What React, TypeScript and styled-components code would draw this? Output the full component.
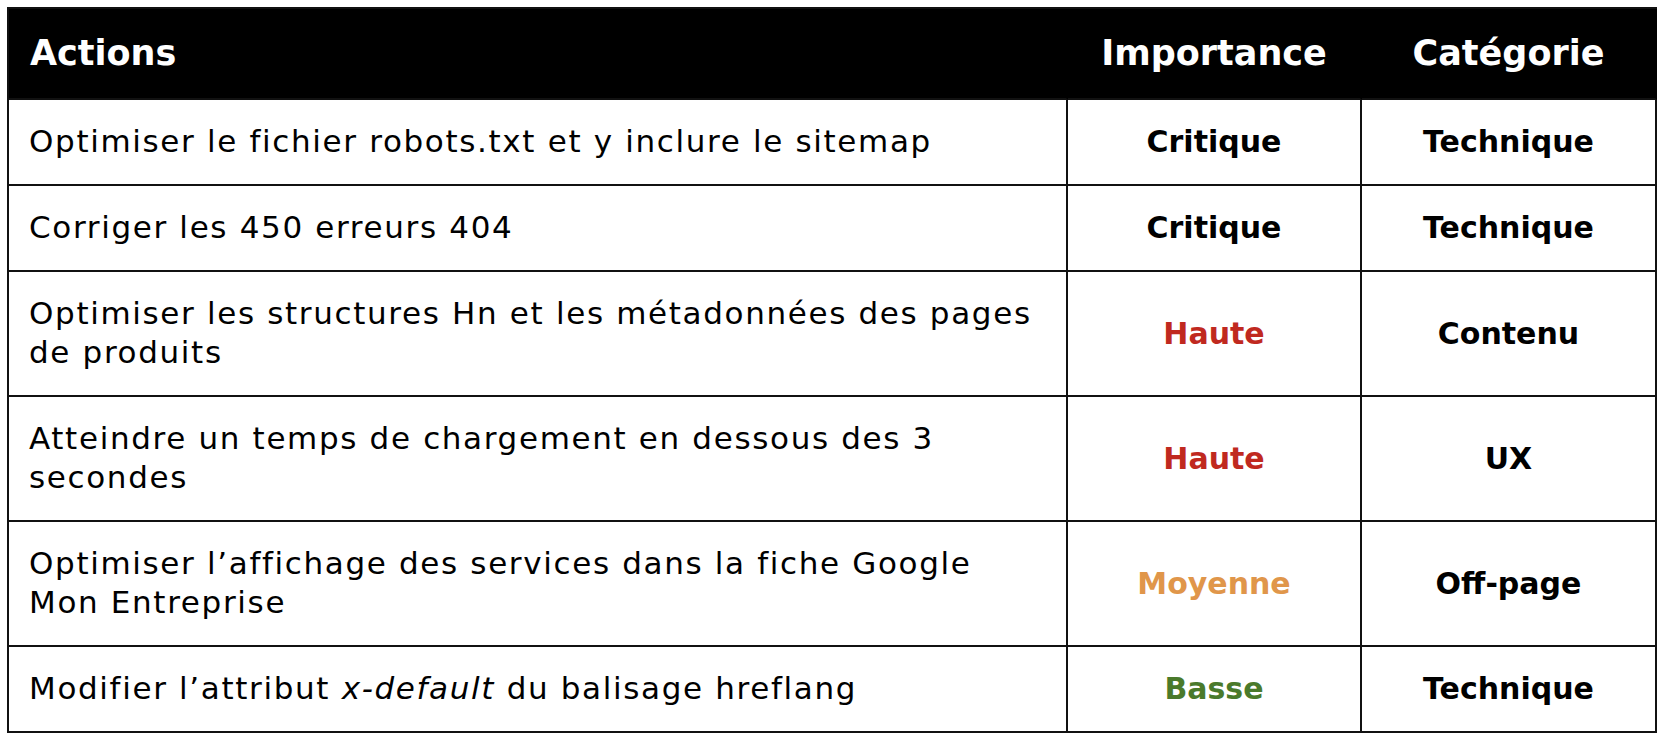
import React, { ReactNode } from "react";
import styled, { createGlobalStyle } from "styled-components";

const GlobalStyle = createGlobalStyle`
  body {
    margin: 0;
    background: #ffffff;
  }
`;

const Page = styled.div`
  padding: 7px 5px 10px 7px;
`;

const Table = styled.table`
  width: 1650px;
  table-layout: fixed;
  border-collapse: separate;
  border-spacing: 0;
  border-top: 2px solid #111;
  border-left: 2px solid #111;
  font-family: "DejaVu Sans", "Noto Sans", sans-serif;
  color: #000;
`;

const Col = styled.col<{ $width: number }>`
  width: ${(p) => p.$width}px;
`;

const HeadCell = styled.th<{ $align?: string }>`
  background: #000;
  color: #fff;
  font-size: 35px;
  font-weight: 700;
  line-height: 41px;
  text-align: ${(p) => p.$align || "center"};
  padding: 24px 12px 24px ${(p) => (p.$align === "left" ? "21px" : "12px")};
  border-right: 2px solid #000;
  border-bottom: 2px solid #111;
`;

const Cell = styled.td`
  border-right: 2px solid #111;
  border-bottom: 2px solid #111;
  vertical-align: middle;
`;

const ActionCell = styled(Cell)`
  font-size: 31px;
  letter-spacing: 1.65px;
  line-height: 39px;
  padding: 22px 12px 23px 20px;

  em {
    font-style: italic;
  }
`;

const Line = styled.span`
  display: block;
  white-space: nowrap;
`;

const TagCell = styled(Cell)<{ $color?: string }>`
  font-size: 30px;
  font-weight: 700;
  line-height: 39px;
  text-align: center;
  color: ${(p) => p.$color || "#000"};
  padding: 22px 8px 23px;
`;

const levelColors: Record<string, string> = {
  Critique: "#000000",
  Haute: "#c0291f",
  Moyenne: "#e0964a",
  Basse: "#4a7a2b",
};

interface Row {
  action: ReactNode[];
  level: string;
  category: string;
}

const rows: Row[] = [
  {
    action: ["Optimiser le fichier robots.txt et y inclure le sitemap"],
    level: "Critique",
    category: "Technique",
  },
  {
    action: ["Corriger les 450 erreurs 404"],
    level: "Critique",
    category: "Technique",
  },
  {
    action: ["Optimiser les structures Hn et les métadonnées des pages", "de produits"],
    level: "Haute",
    category: "Contenu",
  },
  {
    action: ["Atteindre un temps de chargement en dessous des 3", "secondes"],
    level: "Haute",
    category: "UX",
  },
  {
    action: ["Optimiser l’affichage des services dans la fiche Google", "Mon Entreprise"],
    level: "Moyenne",
    category: "Off-page",
  },
  {
    action: [
      <>
        Modifier l’attribut <em>x-default</em> du balisage hreflang
      </>,
    ],
    level: "Basse",
    category: "Technique",
  },
];

export default function App() {
  return (
    <Page>
      <GlobalStyle />
      <Table>
        <colgroup>
          <Col $width={1059} />
          <Col $width={294} />
          <Col $width={295} />
        </colgroup>
        <thead>
          <tr>
            <HeadCell $align="left">Actions</HeadCell>
            <HeadCell>Importance</HeadCell>
            <HeadCell>Catégorie</HeadCell>
          </tr>
        </thead>
        <tbody>
          {rows.map((row, i) => (
            <tr key={i}>
              <ActionCell>
                {row.action.map((line, j) => (
                  <Line key={j}>{line}</Line>
                ))}
              </ActionCell>
              <TagCell $color={levelColors[row.level]}>{row.level}</TagCell>
              <TagCell>{row.category}</TagCell>
            </tr>
          ))}
        </tbody>
      </Table>
    </Page>
  );
}
